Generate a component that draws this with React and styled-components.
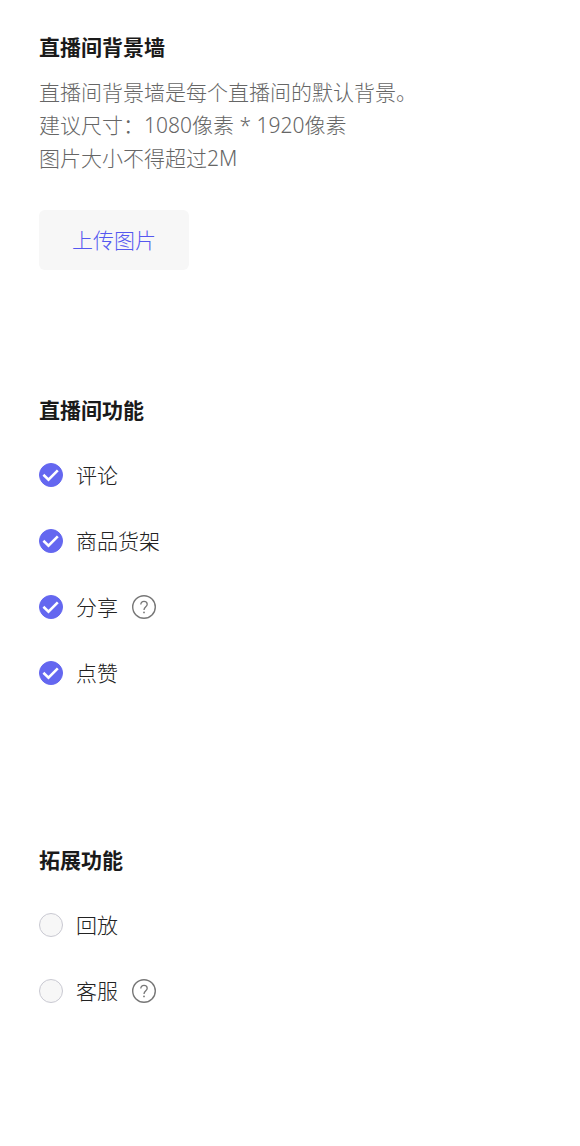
import React, { useState } from 'react';
import styled, { createGlobalStyle } from 'styled-components';

const GlobalStyle = createGlobalStyle`
  body {
    margin: 0;
    background: #fff;
    color: #222;
    font-family: "Noto Sans", "Noto Sans CJK SC", sans-serif;
    font-size: 21px;
    font-weight: 300;
  }
`;

const Page = styled.main`
  padding: 31px 39px 0;
`;

const Section = styled.section`
  padding-bottom: 124px;
`;

const Title = styled.h2`
  margin: 0;
  font-size: 21px;
  font-weight: 700;
  line-height: 32px;
  color: #1a1a1a;
`;

const Description = styled.p`
  margin: 13px 0 35px;
  line-height: 33px;
  color: #666;
`;

const UploadButton = styled.button`
  display: block;
  height: 60px;
  padding: 0 33px 2px;
  border: 0;
  border-radius: 6px;
  background: #f7f7f7;
  color: #5558f0;
  font: inherit;
  cursor: pointer;
`;

const OptionList = styled.ul`
  margin: 0;
  padding: 16px 0 14px;
  list-style: none;
`;

const OptionRow = styled.li`
  display: flex;
  align-items: center;
  gap: 14px;
  height: 66px;
`;

const OptionLabel = styled.label`
  display: flex;
  align-items: center;
  gap: 13px;
  line-height: 32px;
  cursor: pointer;
`;

const CheckWrap = styled.span`
  display: grid;

  > * {
    grid-area: 1 / 1;
  }

  svg {
    pointer-events: none;
  }
`;

const Checkbox = styled.input`
  appearance: none;
  width: 24px;
  height: 24px;
  margin: 0;
  border: 1px solid #c9c9d2;
  border-radius: 50%;
  background: #f7f7f7;
  cursor: pointer;

  &:checked {
    border-color: #6467f0;
    background: #6467f0;
  }
`;

const HelpButton = styled.button`
  display: flex;
  padding: 0;
  border: 0;
  background: none;
  color: #777;
  cursor: pointer;
`;

const CheckMark = () => (
  <svg width="24" height="24" viewBox="0 0 24 24" fill="none" aria-hidden="true">
    <path d="M4.4 11.8L9.5 16.6L18.8 7.4" stroke="#fff" strokeWidth="2.6" />
  </svg>
);

const HelpIcon = () => (
  <svg width="24" height="24" viewBox="0 0 24 24" fill="none" stroke="currentColor" aria-hidden="true">
    <circle cx="12" cy="12" r="11.3" strokeWidth="1.4" />
    <path d="M8.8 9.6C8.8 7.6 10.1 6.4 12 6.4C13.9 6.4 15.2 7.6 15.2 9.3C15.2 11.7 12 11.8 12 15" strokeWidth="1.3" />
    <circle cx="12" cy="17.4" r="0.9" fill="currentColor" stroke="none" />
  </svg>
);

const Option = ({ label, defaultChecked, help }) => {
  const [checked, setChecked] = useState(Boolean(defaultChecked));

  return (
    <OptionRow>
      <OptionLabel>
        <CheckWrap>
          <Checkbox
            type="checkbox"
            checked={checked}
            onChange={(e) => setChecked(e.target.checked)}
          />
          {checked && <CheckMark />}
        </CheckWrap>
        {label}
      </OptionLabel>
      {help && (
        <HelpButton type="button" aria-label={label}>
          <HelpIcon />
        </HelpButton>
      )}
    </OptionRow>
  );
};

const App = () => (
  <>
    <GlobalStyle />
    <Page lang="zh-CN">
      <Section>
        <Title>直播间背景墙</Title>
        <Description>
          直播间背景墙是每个直播间的默认背景。
          <br />
          建议尺寸：1080像素 * 1920像素
          <br />
          图片大小不得超过2M
        </Description>
        <UploadButton type="button">上传图片</UploadButton>
      </Section>

      <Section>
        <Title>直播间功能</Title>
        <OptionList>
          <Option label="评论" defaultChecked />
          <Option label="商品货架" defaultChecked />
          <Option label="分享" defaultChecked help />
          <Option label="点赞" defaultChecked />
        </OptionList>
      </Section>

      <Section>
        <Title>拓展功能</Title>
        <OptionList>
          <Option label="回放" />
          <Option label="客服" help />
        </OptionList>
      </Section>
    </Page>
  </>
);

export default App;
